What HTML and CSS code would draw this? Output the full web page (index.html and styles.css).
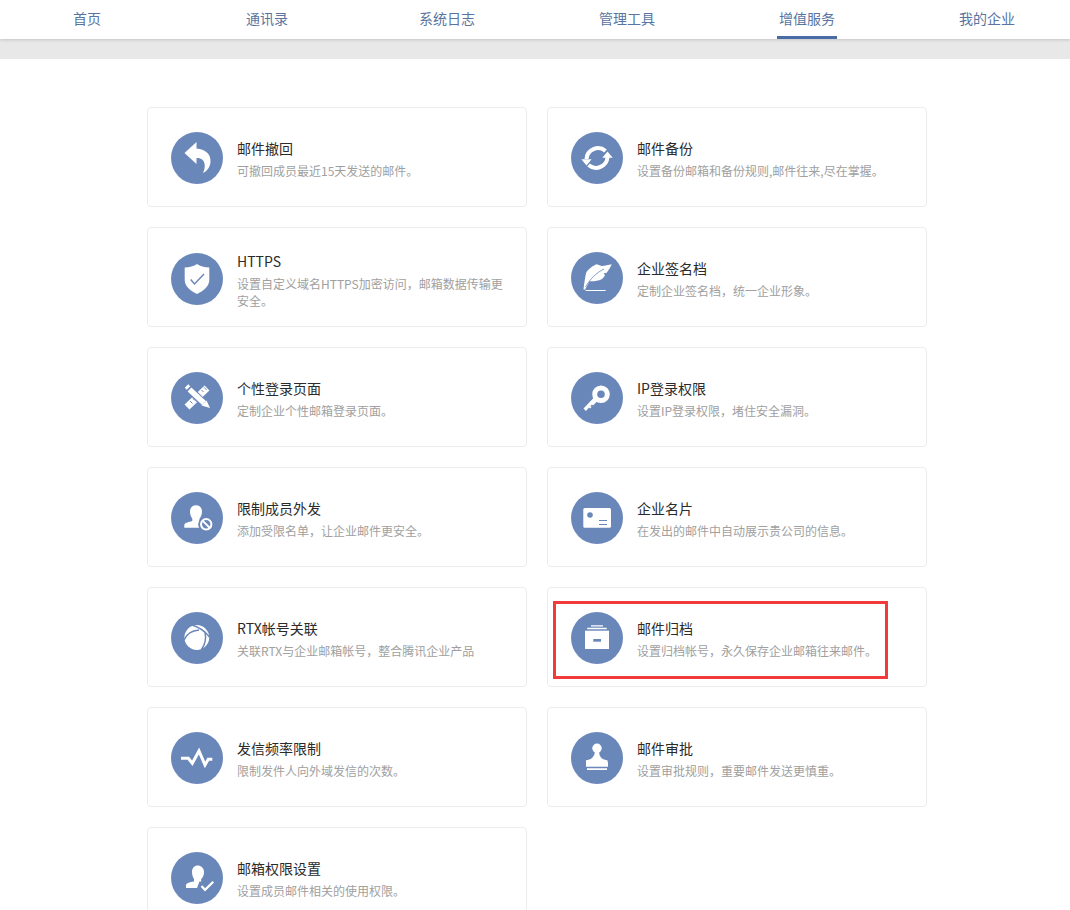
FILE: index.html
```html
<!DOCTYPE html>
<html lang="zh-CN">
<head>
<meta charset="utf-8">
<title>增值服务</title>
<link rel="stylesheet" href="styles.css">
</head>
<body>
<header class="topbar">
  <nav class="nav">
    <div class="nav-item"><a class="nav-link">首页</a></div>
    <div class="nav-item"><a class="nav-link">通讯录</a></div>
    <div class="nav-item"><a class="nav-link">系统日志</a></div>
    <div class="nav-item"><a class="nav-link">管理工具</a></div>
    <div class="nav-item"><a class="nav-link nav-link-active">增值服务</a></div>
    <div class="nav-item"><a class="nav-link">我的企业</a></div>
  </nav>
</header>
<div class="band"></div>
<main class="grid">
  <section class="card">
    <svg class="icon" viewBox="0 0 52 52"><circle class="disc" cx="26" cy="26" r="26"/><path class="w" d="M13.5 21 25.5 10v6.500c8.500.5 14.500 5.500 14 13.500-.3 5-3.500 9-7.500 11 2.500-5 2.500-11-1-13.500-1.500-1.200-3.500-1.500-5.500-1.500v6z"/></svg>
    <div class="text"><h3 class="title">邮件撤回</h3><p class="desc">可撤回成员最近15天发送的邮件。</p></div>
  </section>
  <section class="card">
    <svg class="icon" viewBox="0 0 52 52"><circle class="disc" cx="26" cy="26" r="26"/><path class="ws" stroke-width="4" d="M34.500 19A11.500 11.500 0 0 0 15.500 27"/><path class="ws" stroke-width="4" d="M17.500 33A11.500 11.500 0 0 0 36.500 25"/><path class="w" d="M10.300 27.300h10.300L15.500 33.500zM31.300 25.700h10.400L36.500 19.500z"/></svg>
    <div class="text"><h3 class="title">邮件备份</h3><p class="desc">设置备份邮箱和备份规则,邮件往来,尽在掌握。</p></div>
  </section>
  <section class="card">
    <svg class="icon icon-low" viewBox="0 0 52 52"><circle class="disc" cx="26" cy="26" r="26"/><path class="w" d="M26 11c3 2.200 7.500 3.500 12.300 3.600V27c0 6.500-6 11-12.300 14-6.300-3-12.300-7.500-12.300-14V14.600C18.500 14.500 23 13.200 26 11z"/><path class="bs" stroke-width="1.500" d="M19.700 26.500l3.800 4.500L33 21"/></svg>
    <div class="text text-low"><h3 class="title">HTTPS</h3><p class="desc">设置自定义域名HTTPS加密访问，邮箱数据传输更安全。</p></div>
  </section>
  <section class="card">
    <svg class="icon" viewBox="0 0 52 52"><circle class="disc" cx="26" cy="26" r="26"/><path class="w" d="M12.500 37.500C13 32 14 27 15 21 17 17.500 22 13.500 25.700 12.300L30.700 14C34 13.800 37.500 13 40.700 12.300 39.500 15 37.500 18.500 35.700 20.700L32.500 21.500 34 23C33 25 32 26.500 30.700 27.300 27 29 23 29.500 18.500 29.300L14 37.800z"/><path class="bs" stroke-width=".8" d="M14.500 35C19 27 25 21 33 17"/><path class="ws butt" stroke-width="1" d="M14.700 38.500h20"/></svg>
    <div class="text"><h3 class="title">企业签名档</h3><p class="desc">定制企业签名档，统一企业形象。</p></div>
  </section>
  <section class="card">
    <svg class="icon" viewBox="0 0 52 52"><circle class="disc" cx="26" cy="26" r="26"/><path class="ws butt" stroke-width="7" d="M16 35 36 16"/><path class="bs butt" stroke-width="1" d="M19 29l2.500 2.500M22 26.500l2 2M30.500 18l2 2M33 15.300l2.500 2.500"/><path class="bs butt" stroke-width="8" d="M14.500 13.500 36.500 35"/><path class="ws butt" stroke-width="5.500" d="M18.500 17.500 33 31"/><path class="ws butt" stroke-width="5" d="M15.500 14l2 2"/><path class="w" d="M30.500 33.500l5-5 3.500 7.500z"/></svg>
    <div class="text"><h3 class="title">个性登录页面</h3><p class="desc">定制企业个性邮箱登录页面。</p></div>
  </section>
  <section class="card">
    <svg class="icon" viewBox="0 0 52 52"><circle class="disc" cx="26" cy="26" r="26"/><circle class="ws" stroke-width="5" cx="30" cy="22.300" r="6.300"/><path class="w" d="M22.500 26 26 29.500 22 33.500l-1-1-1.500 1.500 1 1-1.500 1.500-1-1L15 39 12.500 36.500z"/></svg>
    <div class="text"><h3 class="title">IP登录权限</h3><p class="desc">设置IP登录权限，堵住安全漏洞。</p></div>
  </section>
  <section class="card">
    <svg class="icon" viewBox="0 0 52 52"><circle class="disc" cx="26" cy="26" r="26"/><path class="w" d="M19 19.500C19 15.500 21.500 13.300 25 13.300S31 15.500 31 19.500c0 3-1 5.500-2.500 7V29h2v6.700H13.300V33c0-2 4-3 8-4V26.500C20 25 19 22.500 19 19.500z"/><circle class="disc" cx="35.200" cy="32.300" r="8"/><circle class="ws" stroke-width="2" cx="35.200" cy="32.300" r="5.200"/><path class="ws butt" stroke-width="2" d="M31.500 28.600l7.400 7.400"/></svg>
    <div class="text"><h3 class="title">限制成员外发</h3><p class="desc">添加受限名单，让企业邮件更安全。</p></div>
  </section>
  <section class="card">
    <svg class="icon" viewBox="0 0 52 52"><circle class="disc" cx="26" cy="26" r="26"/><rect class="w" x="12.300" y="16" width="27.700" height="19.700" rx="1.500"/><circle class="disc" cx="19" cy="23" r="2.800"/><path class="bs butt" stroke-width="1" d="M28 28.500h8M28 32.500h8"/></svg>
    <div class="text"><h3 class="title">企业名片</h3><p class="desc">在发出的邮件中自动展示贵公司的信息。</p></div>
  </section>
  <section class="card">
    <svg class="icon" viewBox="0 0 52 52"><circle class="disc" cx="26" cy="26" r="26"/><circle class="w" cx="25.800" cy="25.500" r="12.400"/><path class="bs butt" stroke-width="1.500" d="M13 28C15.500 22 21 18.500 28 18M21 13C27.500 15 34 19 38.500 25M34 20C35.500 27 34.500 32 30.500 37.500"/></svg>
    <div class="text"><h3 class="title">RTX帐号关联</h3><p class="desc">关联RTX与企业邮箱帐号，整合腾讯企业产品</p></div>
  </section>
  <section class="card">
    <svg class="icon" viewBox="0 0 52 52"><circle class="disc" cx="26" cy="26" r="26"/><path class="w" d="M14 18.700h24V37H14z"/><path class="w" d="M16.300 15.700h19.400v1.600H16.300zM20 13.200h12v1.300H20z"/><rect class="disc" x="22.300" y="27" width="7.700" height="2.700"/></svg>
    <div class="text"><h3 class="title">邮件归档</h3><p class="desc">设置归档帐号，永久保存企业邮箱往来邮件。</p></div>
    <div class="highlight"></div>
  </section>
  <section class="card">
    <svg class="icon" viewBox="0 0 52 52"><circle class="disc" cx="26" cy="26" r="26"/><polyline class="ws plain" stroke-width="3" points="10,26.300 17.300,26.300 21.300,31.300 28,19 34,33 37.300,27.300 41.300,27.300"/></svg>
    <div class="text"><h3 class="title">发信频率限制</h3><p class="desc">限制发件人向外域发信的次数。</p></div>
  </section>
  <section class="card">
    <svg class="icon" viewBox="0 0 52 52"><circle class="disc" cx="26" cy="26" r="26"/><circle class="w" cx="26" cy="16.300" r="4.700"/><path class="w" d="M23.800 19h4.400c0 4 .8 5 1.500 6 .6 1 1.800 2.500 6.800 3.300V30.500H15v-2.200c5-.8 6.200-2.300 6.800-3.300.7-1 2-2 2-6z"/><path class="w" d="M15 30h22v4.700H15zM16 36.300h20V38H16z"/></svg>
    <div class="text"><h3 class="title">邮件审批</h3><p class="desc">设置审批规则，重要邮件发送更慎重。</p></div>
  </section>
  <section class="card">
    <svg class="icon" viewBox="0 0 52 52"><circle class="disc" cx="26" cy="26" r="26"/><path class="w" d="M21 20c0-4 2.500-6.500 5.700-6.500S33 16 33 20c0 3-1 5.500-2.800 7v2.500H28.500L26 36H15v-3c0-2 4.500-3 8-3.500V27c-1-1.500-2-4-2-7z"/><path class="ws plain" stroke-width="2.200" d="M30.500 34l3.500 3.800 8.300-8.100"/></svg>
    <div class="text"><h3 class="title">邮箱权限设置</h3><p class="desc">设置成员邮件相关的使用权限。</p></div>
  </section>
</main>
</body>
</html>
```
FILE: styles.css
```css
html, body {
  margin: 0;
  padding: 0;
  height: 910px;
  overflow: hidden;
  background: #fff;
  font-family: "Noto Sans CJK SC", "Liberation Sans", sans-serif;
}
.topbar {
  position: relative;
  height: 39px;
  background: #fff;
  box-shadow: 0 1px 3px rgba(0, 0, 0, .16);
}
.nav {
  display: flex;
  width: 1080px;
  margin-left: -3px;
}
.nav-item {
  width: 180px;
  height: 39px;
  display: flex;
  justify-content: center;
}
.nav-link {
  box-sizing: border-box;
  height: 39px;
  padding: 0 2px;
  font-size: 14px;
  line-height: 36px;
  color: #58749f;
}
.nav-link-active {
  border-bottom: 3px solid #4a6ca6;
}
.band {
  height: 20px;
  background: #e8e8e8;
}
.grid {
  display: grid;
  grid-template-columns: 380px 380px;
  grid-auto-rows: 100px;
  gap: 20px;
  margin: 48px 0 0 147px;
}
.card {
  position: relative;
  box-sizing: border-box;
  display: flex;
  align-items: center;
  gap: 14px;
  padding: 1px 23px 0;
  background: #fff;
  border: 1px solid #ececec;
  border-radius: 4px;
}
.icon {
  flex: none;
  width: 52px;
  height: 52px;
}
.icon-low {
  margin-top: 2px;
}
.text {
  min-width: 0;
  padding-top: 2px;
}
.text-low {
  padding-top: 4px;
}
.title {
  margin: 0;
  font-size: 14px;
  font-weight: 400;
  line-height: 20px;
  color: #2b2b2b;
}
.desc {
  margin: 4px 0 0;
  font-size: 12px;
  line-height: 17px;
  color: #a0a0a0;
}
.disc { fill: #6a87b9; }
.w { fill: #fff; }
.ws {
  fill: none;
  stroke: #fff;
}
.bs {
  fill: none;
  stroke: #6a87b9;
}
.butt { stroke-linecap: butt; }
.plain { stroke-linejoin: miter; }
.highlight {
  position: absolute;
  left: 5px;
  top: 13px;
  box-sizing: border-box;
  width: 335px;
  height: 78px;
  border: 3px solid #f33a3a;
}
```
